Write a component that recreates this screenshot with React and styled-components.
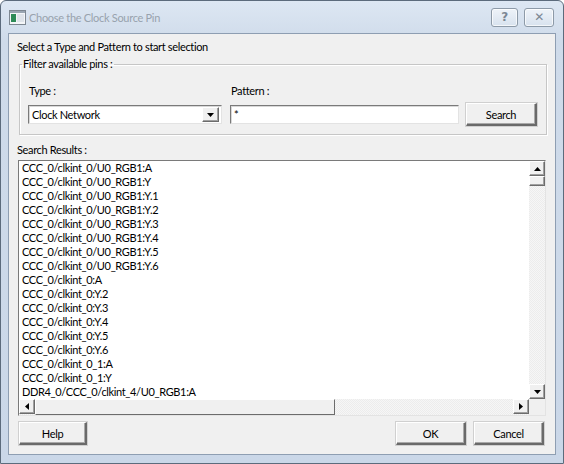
import React from 'react'
import styled, { createGlobalStyle } from 'styled-components'

const GlobalStyle = createGlobalStyle`
  html, body { margin: 0; padding: 0; background: #ffffff; }
  * { box-sizing: border-box; }
`

const Window = styled.div`
  width: 564px;
  height: 464px;
  border: 1px solid #5c6b7c;
  border-radius: 6px 6px 0 0;
  background: linear-gradient(#dde7f3, #cfdbea 40px, #cad7e8);
  display: flex;
  flex-direction: column;
  font-family: Lato, "Noto Sans", sans-serif;
  font-size: 11px;
  letter-spacing: -0.35px;
  color: #000;
`

const TitleBar = styled.div`
  height: 32px;
  display: flex;
  align-items: center;
  padding: 0 9px 0 8px;
  gap: 3px;
`

const TitleText = styled.div`
  flex: 1;
  font-size: 11px;
  letter-spacing: -0.3px;
  color: #98a2ad;
`

const CaptionButton = styled.div`
  width: ${p => p.w}px;
  height: 19px;
  margin-left: 3px;
  border: 1px solid #8d9aa8;
  border-radius: 3px;
  background: linear-gradient(#eef3f9, #d8e2ee);
  box-shadow: inset 0 0 0 1px rgba(255,255,255,0.7);
  display: flex;
  align-items: center;
  justify-content: center;
  color: #7b8794;
  font-family: "DejaVu Sans", sans-serif;
  font-size: 12px;
  font-weight: bold;
`

const Client = styled.div`
  flex: 1;
  margin: 0 7px 8px 7px;
  border: 1px solid #8e9eb2;
  background: #f0f0f0;
  display: flex;
  flex-direction: column;
  padding: 4px 8px 0 8px;
`

const Instruction = styled.div`
  height: 17px;
  line-height: 17px;
`

const GroupBox = styled.fieldset`
  margin: 2px 0 0 2px;
  width: 528px;
  border: 1px solid #c6c6c6;
  box-shadow: 1px 1px 0 #fff, inset 1px 1px 0 #fff;
  padding: 0 8px 8px 8px;
  display: grid;
  grid-template-columns: 202px 236px 71px;
  grid-template-rows: 30px 25px;
`

const Legend = styled.legend`
  padding: 0 2px 0 1px;
  margin-left: -6px;
  line-height: 14px;
`

const FieldLabel = styled.div`
  padding-left: 1px;
  align-self: end;
  margin-bottom: 2px;
  line-height: 17px;
`

const Sunken = styled.div`
  height: 19px;
  margin-top: 4px;
  background: #fff;
  border-top: 1px solid #7a7a7a;
  border-left: 1px solid #7a7a7a;
  border-right: 1px solid #e3e3e3;
  border-bottom: 1px solid #e3e3e3;
  box-shadow: inset 1px 1px 0 #d8d8d8;
  display: flex;
  align-items: center;
  padding-left: 3px;
`

const Combo = styled(Sunken)`
  width: 194px;
  padding-right: 2px;
`

const ComboText = styled.span`
  flex: 1;
`

const PatternInput = styled(Sunken)`
  width: 229px;
`

const ArrowButton = styled.div`
  width: ${p => p.w || 16}px;
  height: ${p => p.h || 15}px;
  background: #f0f0f0;
  border-top: 1px solid #fff;
  border-left: 1px solid #fff;
  border-right: 1px solid #6c6c6c;
  border-bottom: 1px solid #6c6c6c;
  box-shadow: inset -1px -1px 0 #a0a0a0;
  display: flex;
  align-items: center;
  justify-content: center;
  flex-shrink: 0;
`

const Button = styled.div`
  width: ${p => p.w}px;
  height: 23px;
  background: #f0f0f0;
  border-top: 1px solid #fff;
  border-left: 1px solid #fff;
  border-right: 2px solid #6a6a6a;
  border-bottom: 2px solid #6a6a6a;
  box-shadow: inset -1px -1px 0 #a9a9a9, 0 0 0 1px #d0d0d0;
  display: flex;
  align-items: center;
  justify-content: center;
`

const SearchButton = styled(Button)`
  margin-top: 2px;
`

const ResultsLabel = styled.div`
  margin-top: 6px;
  height: 17px;
  line-height: 17px;
`

const ListBox = styled.div`
  margin: 2px 0 0 1px;
  width: 528px;
  height: 256px;
  background: #fff;
  border-top: 1px solid #7a7a7a;
  border-left: 1px solid #7a7a7a;
  border-right: 1px solid #e3e3e3;
  border-bottom: 1px solid #e3e3e3;
  display: grid;
  grid-template-columns: 1fr 16px;
  grid-template-rows: 1fr 16px;
`

const Items = styled.div`
  padding: 0 0 0 3px;
  overflow: hidden;
`

const Item = styled.div`
  height: 14px;
  line-height: 14px;
  font-size: 11px;
  white-space: nowrap;
`

const VScroll = styled.div`
  display: flex;
  flex-direction: column;
  background: repeating-conic-gradient(#f6f6f6 0 25%, #ececec 0 50%) 0 0 / 2px 2px;
`

const Track = styled.div`
  flex: 1;
`

const HScroll = styled.div`
  display: flex;
  background: repeating-conic-gradient(#f6f6f6 0 25%, #ececec 0 50%) 0 0 / 2px 2px;
`

const HThumb = styled.div`
  width: 300px;
  background: #f0f0f0;
  border-top: 1px solid #fff;
  border-left: 1px solid #fff;
  border-right: 1px solid #6c6c6c;
  border-bottom: 1px solid #6c6c6c;
`

const Corner = styled.div`
  background: #f0f0f0;
`

const Footer = styled.div`
  display: flex;
  align-items: center;
  margin: 6px 3px 0 2px;
  gap: 8px;
`

const Spacer = styled.div`
  flex: 1;
`

const Tri = ({ dir }) => {
  const pts = {
    up: '0,4 7,4 3.5,0',
    down: '0,0 7,0 3.5,4',
    left: '4,0 4,7 0,3.5',
    right: '0,0 0,7 4,3.5',
  }[dir]
  const vertical = dir === 'up' || dir === 'down'
  return (
    <svg width={vertical ? 7 : 4} height={vertical ? 4 : 7} viewBox={vertical ? '0 0 7 4' : '0 0 4 7'}>
      <polygon points={pts} fill="#000" />
    </svg>
  )
}

const WindowIcon = () => (
  <svg width="17" height="15" viewBox="0 0 17 15">
    <rect x="0.5" y="0.5" width="16" height="14" fill="#f4f6f8" stroke="#7d8791" />
    <rect x="1" y="1" width="15" height="2" fill="#9aa6b2" />
    <rect x="2" y="4" width="5" height="8" fill="#2e8b57" />
    <rect x="8" y="4" width="7" height="8" fill="#dfe4ea" />
  </svg>
)

const items = [
  'CCC_0/clkint_0/U0_RGB1:A',
  'CCC_0/clkint_0/U0_RGB1:Y',
  'CCC_0/clkint_0/U0_RGB1:Y.1',
  'CCC_0/clkint_0/U0_RGB1:Y.2',
  'CCC_0/clkint_0/U0_RGB1:Y.3',
  'CCC_0/clkint_0/U0_RGB1:Y.4',
  'CCC_0/clkint_0/U0_RGB1:Y.5',
  'CCC_0/clkint_0/U0_RGB1:Y.6',
  'CCC_0/clkint_0:A',
  'CCC_0/clkint_0:Y.2',
  'CCC_0/clkint_0:Y.3',
  'CCC_0/clkint_0:Y.4',
  'CCC_0/clkint_0:Y.5',
  'CCC_0/clkint_0:Y.6',
  'CCC_0/clkint_0_1:A',
  'CCC_0/clkint_0_1:Y',
  'DDR4_0/CCC_0/clkint_4/U0_RGB1:A',
]

export default function App() {
  return (
    <>
      <GlobalStyle />
      <Window>
        <TitleBar>
          <WindowIcon />
          <TitleText>Choose the Clock Source Pin</TitleText>
          <CaptionButton w={27}>?</CaptionButton>
          <CaptionButton w={30}>✕</CaptionButton>
        </TitleBar>
        <Client>
          <Instruction>Select a Type and Pattern to start selection</Instruction>
          <GroupBox>
            <Legend>Filter available pins :</Legend>
            <FieldLabel>Type :</FieldLabel>
            <FieldLabel>Pattern :</FieldLabel>
            <div />
            <Combo>
              <ComboText>Clock Network</ComboText>
              <ArrowButton w={17} h={15}><Tri dir="down" /></ArrowButton>
            </Combo>
            <PatternInput>*</PatternInput>
            <SearchButton w={71}>Search</SearchButton>
          </GroupBox>
          <ResultsLabel>Search Results :</ResultsLabel>
          <ListBox>
            <Items>
              {items.map(it => <Item key={it}>{it}</Item>)}
            </Items>
            <VScroll>
              <ArrowButton><Tri dir="up" /></ArrowButton>
              <ArrowButton h={10} />
              <Track />
              <ArrowButton><Tri dir="down" /></ArrowButton>
            </VScroll>
            <HScroll>
              <ArrowButton><Tri dir="left" /></ArrowButton>
              <HThumb />
              <Track />
              <ArrowButton><Tri dir="right" /></ArrowButton>
            </HScroll>
            <Corner />
          </ListBox>
          <Footer>
            <Button w={68}>Help</Button>
            <Spacer />
            <Button w={70}>OK</Button>
            <Button w={70}>Cancel</Button>
          </Footer>
        </Client>
      </Window>
    </>
  )
}
